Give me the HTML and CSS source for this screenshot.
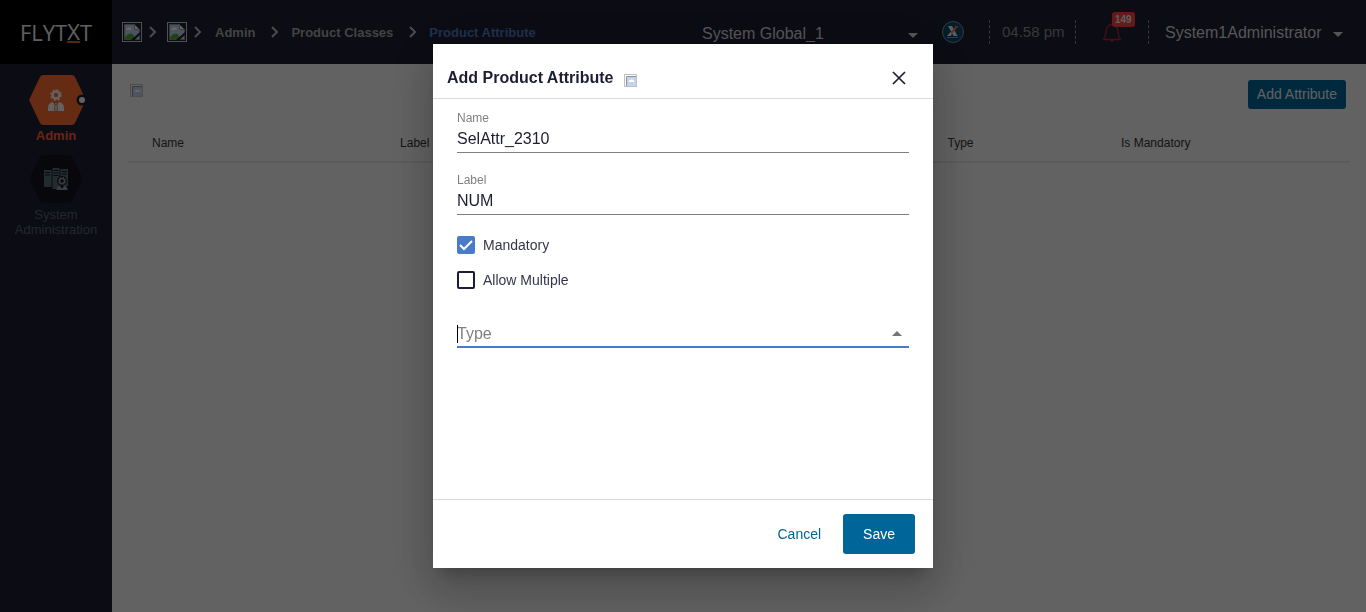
FILE: index.html
```html
<!DOCTYPE html>
<html lang="en">
<head>
<meta charset="utf-8">
<title>Product Attribute</title>
<link rel="stylesheet" href="styles.css">
</head>
<body>
<svg class="defs" aria-hidden="true">
  <symbol id="broken" viewBox="0 0 20 20">
    <rect x=".5" y=".5" width="19" height="19" fill="none" stroke="#c8c8c8"/>
    <path d="M2.500 17.500v-15h10l5 5v10z" fill="#bfd0ee" stroke="#8d8d8d"/>
    <path d="M12.500 2.500v5h5z" fill="#f4f4f4" stroke="#9a9a9a"/>
    <path d="M4 8q0-2 2-2 1-2 2.500 0 1.500 0 1.500 2z" fill="#fff"/>
    <path d="M3 17v-2q3-4 6-3.500t4 5.500z" fill="#4caa35"/>
    <path d="M9 18l9-8v3l-5.500 5z" fill="#1c1e33"/>
    <path d="M13.500 17.500h4V14" fill="#bfd0ee" stroke="#8d8d8d"/>
  </symbol>
  <symbol id="broken-small" viewBox="0 0 13 13">
    <rect x=".5" y=".5" width="12" height="12" fill="none" stroke="#c0c0c0"/>
    <path d="M2.500 12V2.500H12" fill="none" stroke="#8d939c"/>
    <path d="M3 3h9v9H3z" fill="#c3d4ef"/>
    <path d="M4.500 8q0-2 2-2 1-1.500 2.500 0 1.500 0 1.500 2z" fill="#fff"/>
  </symbol>
  <symbol id="chevron" viewBox="0 0 8 12">
    <path d="M1 1l5 5-5 5" fill="none" stroke="#bdbdbd" stroke-width="2"/>
  </symbol>
</svg>
<div class="app">
  <header class="topbar">
    <a class="logo" href="#">FLYT<span class="logo-x">X</span>T</a>
    <nav class="crumbs" aria-label="Breadcrumb">
      <a class="crumb-pic" href="#" aria-label="Home"><svg class="pic"><use href="#broken"/></svg></a>
      <svg class="chev"><use href="#chevron"/></svg>
      <a class="crumb-pic" href="#" aria-label="Section"><svg class="pic"><use href="#broken"/></svg></a>
      <svg class="chev"><use href="#chevron"/></svg>
      <a class="crumb" href="#">Admin</a>
      <svg class="chev wide"><use href="#chevron"/></svg>
      <a class="crumb" href="#">Product Classes</a>
      <svg class="chev wide"><use href="#chevron"/></svg>
      <a class="crumb current" href="#">Product Attribute</a>
    </nav>
    <div class="tools">
      <span class="pick scope">
        <select aria-label="Scope"><option>System Global_1</option></select>
        <svg class="arrow" viewBox="0 0 10 5"><path d="M0 0h10L5 5z" fill="#d6d6d6"/></svg>
      </span>
      <svg class="xmark" viewBox="0 0 22 22">
        <circle cx="11" cy="11" r="10.500" fill="#0a4a66" stroke="#7d93a3"/>
        <path d="M6 5h4l5.500 10h-4z" fill="#e8e8e8"/>
        <path d="M14 5h2.500L8 15H5.500z" fill="#f0743e"/>
        <path d="M5 15l3.500-4 1.500 2-1.500 2z" fill="#e8e8e8"/>
        <path d="M5 16.500h11" stroke="#f0743e"/>
      </svg>
      <span class="time">04.58 pm</span>
      <button class="bell" type="button" aria-label="Notifications">
        <svg viewBox="0 0 20 20"><path d="M1 17.500c2-1 2.500-4 3-8C4.500 5 6.500 2.500 10 2.500s5.500 2.500 6 7c.5 4 1 7 3 8zM8.500 19h3M10 2.500V1" fill="none" stroke="#b02a2a" stroke-width="1.300"/></svg>
        <span class="badge">149</span>
      </button>
      <span class="pick user">
        <select aria-label="Account"><option>System1Administrator</option></select>
        <svg class="arrow" viewBox="0 0 10 5"><path d="M0 0h10L5 5z" fill="#d6d6d6"/></svg>
      </span>
    </div>
  </header>
  <div class="main">
    <nav class="side" aria-label="Modules">
      <a class="module active" href="#">
        <svg class="hex" viewBox="0 0 60 50">
          <path d="M14 0h29q2 0 3 2l9 19v8l-9 19q-1 2-3 2H14q-2 0-3-2L0 25 11 2q1-2 3-2z" fill="#ff6b30"/>
          <circle cx="53" cy="25" r="5.500" fill="#1c1e33"/><circle cx="53" cy="25" r="3" fill="#f5f5f5"/>
          <circle cx="27" cy="20" r="3.500" fill="none" stroke="#f5f5f5" stroke-width="2.400"/>
          <circle cx="27" cy="20" r="5" fill="none" stroke="#f5f5f5" stroke-width="1.600" stroke-dasharray="2 1.927"/>
          <path d="M19 36v-3q0-5 5-6l3 5 3-5q5 1 5 6v3z" fill="#f5f5f5"/>
          <path d="M25.500 27.500h3l-.8 2 1 5.500h-3.400l1-5.500z" fill="#f5f5f5" stroke="#c04a20" stroke-width=".7"/>
        </svg>
        Admin
      </a>
      <a class="module" href="#">
        <svg class="hex" viewBox="0 0 60 50">
          <path d="M14 1h26q2 0 3 2l11 22-11 22q-1 2-3 2H14q-2 0-3-2L0 25 11 3q1-2 3-2z" fill="#14161f"/>
          <path d="M15 16h7.500v17H15zM23.500 14h7v21h-7zM31.500 15H39v17h-7.500z" fill="#5a6b75"/>
          <path d="M16 18.500h5M16 21h5M24.500 16.500h5M24.500 19h5M24.500 21.500h5M33 17.500h5M33 20h5" stroke="#14161f"/>
          <circle cx="33" cy="27" r="5" fill="#14161f"/>
          <circle cx="33" cy="27" r="2.500" fill="none" stroke="#8a9aa3" stroke-width="1.400"/>
          <circle cx="33" cy="27" r="3.800" fill="none" stroke="#8a9aa3" stroke-dasharray="1.500 1.484"/>
          <path d="M27.500 36q0-4 3-4.500l2.500 3 2.500-3q3 .5 3 4.500z" fill="#8a9aa3"/>
        </svg>
        System Administration
      </a>
    </nav>
    <main class="content">
      <div class="actions">
        <svg class="pic-small" role="img" aria-label="Help"><use href="#broken-small"/></svg>
        <button class="add" type="button">Add Attribute</button>
      </div>
      <table class="grid">
        <thead><tr><th class="c-name">Name</th><th class="c-label">Label</th><th class="c-type">Type</th><th>Is Mandatory</th></tr></thead>
      </table>
    </main>
  </div>
</div>
<div class="overlay">
  <form class="dialog" role="dialog" aria-labelledby="dlg-title">
    <div class="dialog-head">
      <h1 id="dlg-title">Add Product Attribute</h1>
      <svg class="pic-small" role="img" aria-label="Help"><use href="#broken-small"/></svg>
      <button class="close" type="button" aria-label="Close"><svg viewBox="0 0 14 14"><path d="M1 1l12 12M13 1L1 13" stroke="#1c1e33" stroke-width="1.700"/></svg></button>
    </div>
    <div class="dialog-body">
      <div class="field"><label for="name">Name</label><input id="name" type="text" value="SelAttr_2310"></div>
      <div class="field"><label for="label">Label</label><input id="label" type="text" value="NUM"></div>
      <label class="check"><input type="checkbox" checked>Mandatory</label>
      <label class="check"><input type="checkbox">Allow Multiple</label>
      <div class="combo">
        <span class="caret"></span>
        <input type="text" role="combobox" aria-expanded="true" aria-label="Type" placeholder="Type">
        <svg class="arrow" viewBox="0 0 10 5"><path d="M0 5h10L5 0z" fill="#757575"/></svg>
      </div>
    </div>
    <div class="dialog-foot">
      <button class="cancel" type="button">Cancel</button>
      <button class="save" type="submit">Save</button>
    </div>
  </form>
</div>
</body>
</html>
```

FILE: styles.css
```css
* { box-sizing: border-box; }
body { margin: 0; font-family: "Liberation Sans", Arial, sans-serif; font-size: 14px; color: #1c1e33; }
button, input, select { font: inherit; color: inherit; margin: 0; padding: 0; border: 0; background: none; outline: 0; }
button { cursor: pointer; }
a { color: inherit; text-decoration: none; }
svg { display: block; flex: none; }
.defs { position: absolute; width: 0; height: 0; }

.app { display: flex; flex-direction: column; min-height: 100vh; background: #f5f5f5; }
.topbar { display: flex; align-items: center; height: 64px; background: #1c1e33; }
.logo { display: flex; align-items: center; justify-content: center; align-self: stretch; width: 112px; background: #000; color: #f0f0f0; font-family: "Open Sans", sans-serif; font-size: 22px; line-height: 20px; }
.logo-x { border-bottom: 2px solid #d8622c; }
.crumbs { display: flex; align-items: center; padding-left: 10px; font-size: 13px; font-weight: bold; color: #a8a8a8; white-space: nowrap; }
.pic { width: 20px; height: 20px; }
.chev { width: 8px; height: 12px; margin: 0 10px 0 7px; }
.crumb { padding-left: 3px; }
.chev.wide { margin: 0 9px 0 16px; }
.current { color: #4a7bc8; }
.tools { display: flex; align-items: center; margin-left: auto; padding-right: 23px; color: #d6d6d6; }
.pick { display: flex; align-items: center; justify-content: space-between; font-size: 16px; }
.pick select { appearance: none; flex: 1; }
.pick .arrow { margin-top: 4px; }
.arrow { width: 10px; height: 5px; }
.scope { width: 216px; margin-right: 24px; padding-top: 2px; }
.xmark { width: 22px; height: 22px; margin-right: 25px; }
.time { width: 87px; padding-left: 12px; border: dashed #8a8a8a; border-width: 0 1px; font-size: 15px; line-height: 24px; color: #909090; }
.bell { position: relative; width: 73px; height: 24px; padding-left: 26px; border-right: 1px dashed #8a8a8a; }
.bell svg { width: 20px; height: 20px; }
.badge { position: absolute; left: 36px; top: -8px; padding: 0 3px; border-radius: 3px; background: #ff3f3f; color: #eee; font-size: 10px; font-weight: bold; line-height: 15px; }
.user { width: 194px; padding-left: 16px; }

.main { display: flex; flex: 1; }
.side { display: flex; flex-direction: column; gap: 11px; width: 112px; padding-top: 11px; background: #1c1e33; }
.module { display: flex; flex-direction: column; align-items: center; gap: 3px; padding: 0 8px; font-size: 13px; line-height: 15px; text-align: center; color: #58656d; }
.module.active { color: #ff6036; font-weight: bold; }
.hex { width: 60px; height: 50px; margin-left: 6px; }
.content { flex: 1; padding: 16px; }
.actions { display: flex; align-items: flex-start; justify-content: space-between; padding: 0 4px 0 2px; }
.pic-small { width: 13px; height: 13px; margin-top: 4px; }
.add { padding: 0 9px; border-radius: 3px; background: #00669a; color: #f0f0f0; line-height: 29px; }
.grid { width: 100%; margin-top: 15px; border-collapse: collapse; table-layout: fixed; border-bottom: 2px solid #e4e4e4; }
.grid th { padding: 0 0 0 24px; height: 38px; font-size: 12px; font-weight: normal; text-align: left; color: #333; }
.c-name { width: 20.3%; }
.c-label { width: 44.800%; }
.c-type { width: 14.200%; }

.overlay { position: fixed; inset: 0; display: flex; align-items: center; justify-content: center; background: rgba(0, 0, 0, .6); }
.dialog { width: 500px; max-width: 100%; background: #fff; box-shadow: 0 11px 15px -7px rgba(0, 0, 0, .2), 0 24px 38px 3px rgba(0, 0, 0, .14), 0 9px 46px 8px rgba(0, 0, 0, .12); }
.dialog-head { display: flex; align-items: center; padding: 14px 27px 0 14px; height: 55px; border-bottom: 1px solid #dcdcdc; }
.dialog-head h1 { margin: 0 10px 0 0; font-size: 16px; line-height: 20px; }
.dialog-head .pic-small { margin: 4px 0 0; }
.close { width: 14px; height: 14px; margin-left: auto; }
.dialog-body { display: flex; flex-direction: column; min-height: 400px; padding: 12px 24px; }
.field { display: flex; flex-direction: column; margin-bottom: 20px; }
.field label { font-size: 12px; line-height: 14px; color: #808080; }
.field input { height: 28px; padding-top: 1px; border-bottom: 1px solid #808080; border-radius: 0; font-size: 16px; }
.check { display: flex; align-items: center; gap: 8px; height: 20px; margin-bottom: 15px; color: #33364a; }
.check input { appearance: none; width: 18px; height: 18px; border: 2px solid #1c1e33; border-radius: 2px; }
.check input:checked { border-color: #4a7bc8; background: #4a7bc8 url("data:image/svg+xml,%3Csvg xmlns='http://www.w3.org/2000/svg' viewBox='0 0 14 14'%3E%3Cpath d='M1 7l4 4 8-8' fill='none' stroke='white' stroke-width='2'/%3E%3C/svg%3E") center / 14px 14px no-repeat; }
.combo { position: relative; display: flex; align-items: center; margin-top: 15px; padding-right: 7px; border-bottom: 2px solid #4a7bc8; }
.combo input { flex: 1; height: 26px; padding-top: 1px; font-size: 16px; }
.combo input::placeholder { color: #808080; opacity: 1; }
.caret { position: absolute; left: 0; top: 5px; width: 1px; height: 18px; background: #000; }
.dialog-foot { display: flex; align-items: center; justify-content: flex-end; gap: 22px; height: 69px; padding-right: 18px; border-top: 1px solid #dcdcdc; }
.cancel { color: #00669a; }
.save { height: 40px; padding: 0 20px; border-radius: 3px; background: #00669a; color: #fff; }
```
